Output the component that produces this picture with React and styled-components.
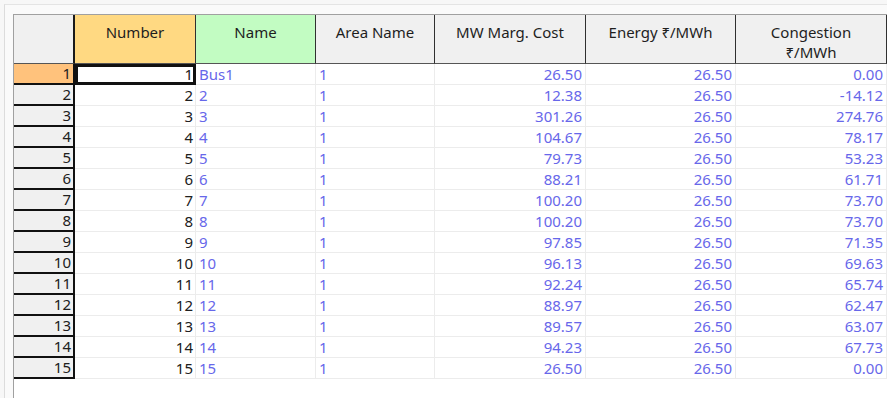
import styled, { createGlobalStyle } from 'styled-components';

const GlobalStyle = createGlobalStyle`
  html, body {
    margin: 0;
    padding: 0;
    background: #f7f7f7;
  }
  body {
    font-family: "Noto Sans", "Open Sans", "DejaVu Sans", sans-serif;
  }
`;

const columns = [
  { key: 'number', title: ['Number'], tone: 'number' },
  { key: 'name', title: ['Name'], tone: 'name' },
  { key: 'area', title: ['Area Name'] },
  { key: 'mw', title: ['MW Marg. Cost'] },
  { key: 'energy', title: ['Energy ₹/MWh'] },
  { key: 'congestion', title: ['Congestion', '₹/MWh'] },
];

const costs = [
  ['26.50', '0.00'],
  ['12.38', '-14.12'],
  ['301.26', '274.76'],
  ['104.67', '78.17'],
  ['79.73', '53.23'],
  ['88.21', '61.71'],
  ['100.20', '73.70'],
  ['100.20', '73.70'],
  ['97.85', '71.35'],
  ['96.13', '69.63'],
  ['92.24', '65.74'],
  ['88.97', '62.47'],
  ['89.57', '63.07'],
  ['94.23', '67.73'],
  ['26.50', '0.00'],
];

const rows = costs.map(([mw, congestion], i) => ({
  id: i + 1,
  number: i + 1,
  name: i === 0 ? 'Bus1' : String(i + 1),
  area: '1',
  mw,
  energy: '26.50',
  congestion,
}));

const headerTones = {
  number: '#ffd982',
  name: '#c2fcc2',
};

const App = () => {
  return (
    <>
      <GlobalStyle />
      <Frame>
        <Panel>
          <GridArea>
            <Grid>
              <Corner />
              {columns.map((col) => (
                <HeaderCell key={col.key} $bg={headerTones[col.tone]}>
                  {col.title.map((line) => (
                    <HeaderLine key={line}>{line}</HeaderLine>
                  ))}
                </HeaderCell>
              ))}
              {rows.map((row) => (
                <Row key={row.id} row={row} selected={row.id === 1} />
              ))}
            </Grid>
          </GridArea>
        </Panel>
      </Frame>
    </>
  );
};

const Row = ({ row, selected }) => (
  <>
    <RowHeader $selected={selected}>{row.id}</RowHeader>
    <NumberCell $selected={selected}>{row.number}</NumberCell>
    <Cell>{row.name}</Cell>
    <Cell>{row.area}</Cell>
    <Cell $right>{row.mw}</Cell>
    <Cell $right>{row.energy}</Cell>
    <Cell $right>{row.congestion}</Cell>
  </>
);

const Frame = styled.div`
  height: 398px;
  box-sizing: border-box;
  padding: 4px 0 0 4px;
  overflow: hidden;
`;

const Panel = styled.div`
  height: 100%;
  box-sizing: border-box;
  border-left: 1px solid #dcdcdc;
  border-top: 1px solid #e4e4e4;
  background: #fafafa;
  padding: 9px 0 0 8px;
`;

const GridArea = styled.div`
  height: 100%;
  box-sizing: border-box;
  border-left: 1px solid #a0a0a0;
  border-top: 1px solid #a0a0a0;
  background: #ffffff;
`;

const Grid = styled.div`
  display: grid;
  grid-template-columns: 61px 121px 120px 119px 151px 150px 151px;
  grid-template-rows: 49px;
  grid-auto-rows: 21px;
  font-size: 15px;
  color: #202020;
`;

const Corner = styled.div`
  background: #f0f0f0;
  border-right: 2px solid #1a1a1a;
  border-bottom: 1px solid #555555;
`;

const HeaderCell = styled.div`
  background: ${(p) => p.$bg || '#f0f0f0'};
  border-right: 1px solid #303030;
  border-bottom: 1px solid #555555;
  text-align: center;
  padding-top: 7px;
  box-sizing: border-box;
  color: #1e1e1e;
`;

const HeaderLine = styled.div`
  line-height: 20px;
  white-space: nowrap;
`;

const RowHeader = styled.div`
  background: ${(p) => (p.$selected ? '#ffc27c' : '#f0f0f0')};
  border-right: 2px solid #111111;
  border-bottom: 2px solid #111111;
  text-align: right;
  padding-right: 2px;
  line-height: 19px;
  color: #202020;
`;

const Cell = styled.div`
  border-right: 1px solid #ececec;
  border-bottom: 1px solid #ececec;
  color: #6767ea;
  line-height: 20px;
  padding: 0 3px;
  text-align: ${(p) => (p.$right ? 'right' : 'left')};
  white-space: nowrap;
  overflow: hidden;
`;

const NumberCell = styled.div`
  border-right: 1px solid #ececec;
  border-bottom: 1px solid #ececec;
  color: #202020;
  text-align: right;
  line-height: 20px;
  padding: 0 2px;
  box-sizing: border-box;
  ${(p) =>
    p.$selected &&
    `
    border: 3px solid #111111;
    line-height: 15px;
    padding: 0 0;
  `}
`;

export default App;
